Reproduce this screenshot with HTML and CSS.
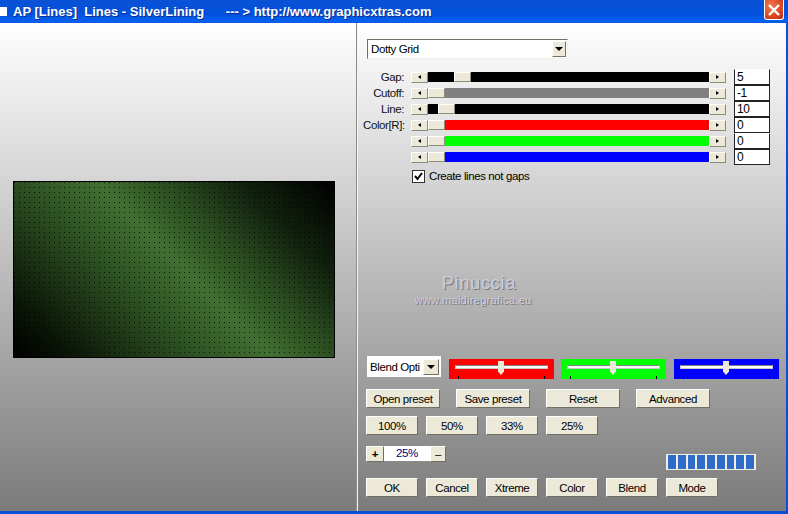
FILE: index.html
```html
<!DOCTYPE html>
<html lang="en">
  <head>
    <meta charset="utf-8">
    <title>AP [Lines] Lines - SilverLining</title>
    <link rel="stylesheet" href="styles.css">
  </head>

  <body>
    <div class="window">

      <div class="titleBar">
        <span class="appIcon"></span>
        <span class="titleText">AP [Lines]&nbsp; Lines - SilverLining &nbsp; &nbsp; &nbsp;--- &gt; http://www.graphicxtras.com</span>
        <span class="closeBtn">
          <svg width="14" height="14" viewBox="0 0 14 14"><path d="M2 2 L12 12 M12 2 L2 12" stroke="#fff" stroke-width="2.4"/></svg>
        </span>
      </div>

      <div class="client">
        <div class="previewPane">
          <div class="preview"></div>
        </div>

        <div class="controls">
          <div class="combo wide">
            <span class="comboText">Dotty Grid</span>
            <span class="comboArrow"></span>
          </div>

          <div class="sliders">
            <div class="sliderRow">
              <label>Gap:</label>
              <div class="scrollbar">
                <span class="arrow left"></span>
                <div class="track black"><span class="pad gapPad"></span><span class="thumb"></span></div>
                <span class="arrow right"></span>
              </div>
              <span class="value open">5</span>
            </div>
            <div class="sliderRow">
              <label>Cutoff:</label>
              <div class="scrollbar">
                <span class="arrow left"></span>
                <div class="track gray"><span class="thumb"></span></div>
                <span class="arrow right"></span>
              </div>
              <span class="value">-1</span>
            </div>
            <div class="sliderRow">
              <label>Line:</label>
              <div class="scrollbar">
                <span class="arrow left"></span>
                <div class="track black"><span class="pad linePad"></span><span class="thumb"></span></div>
                <span class="arrow right"></span>
              </div>
              <span class="value">10</span>
            </div>
            <div class="sliderRow">
              <label>Color[R]:</label>
              <div class="scrollbar">
                <span class="arrow left"></span>
                <div class="track red"><span class="thumb"></span></div>
                <span class="arrow right"></span>
              </div>
              <span class="value">0</span>
            </div>
            <div class="sliderRow">
              <label></label>
              <div class="scrollbar">
                <span class="arrow left"></span>
                <div class="track green"><span class="thumb"></span></div>
                <span class="arrow right"></span>
              </div>
              <span class="value open">0</span>
            </div>
            <div class="sliderRow">
              <label></label>
              <div class="scrollbar">
                <span class="arrow left"></span>
                <div class="track blue"><span class="thumb"></span></div>
                <span class="arrow right"></span>
              </div>
              <span class="value">0</span>
            </div>
          </div>

          <div class="checkRow">
            <span class="checkbox">
              <svg width="11" height="11" viewBox="0 0 11 11"><path d="M2 5 L4.5 8 L9 2" fill="none" stroke="#000" stroke-width="2"/></svg>
            </span>
            <span>Create lines not gaps</span>
          </div>

          <div class="watermark">
            <div class="wmName">Pinuccia</div>
            <div class="wmUrl">www.maidiregrafica.eu</div>
          </div>

          <div class="blendRow">
            <div class="combo small">
              <span class="comboText">Blend Opti</span>
              <span class="comboArrow"></span>
            </div>
            <div class="tint red"><div class="tintLine"></div><span class="tintThumb"></span><i class="tick t1"></i><i class="tick t2"></i></div>
            <div class="tint green"><div class="tintLine"></div><span class="tintThumb"></span><i class="tick t1"></i><i class="tick t2"></i></div>
            <div class="tint blue"><div class="tintLine"></div><span class="tintThumb"></span><i class="tick t1"></i><i class="tick t2"></i></div>
          </div>

          <div class="btnRow presets">
            <button class="btn wideBtn">Open preset</button>
            <button class="btn wideBtn">Save preset</button>
            <button class="btn wideBtn">Reset</button>
            <button class="btn wideBtn">Advanced</button>
          </div>

          <div class="btnRow scales">
            <button class="btn">100%</button>
            <button class="btn">50%</button>
            <button class="btn">33%</button>
            <button class="btn">25%</button>
          </div>

          <div class="zoomRow">
            <button class="btn zoomBtn plus"><b>+</b></button>
            <span class="zoomValue">25%</span>
            <button class="btn zoomBtn">–</button>
            <div class="progress">
              <i></i><i></i><i></i><i></i><i></i><i></i><i></i><i></i><i></i>
            </div>
          </div>

          <div class="btnRow actions">
            <button class="btn">OK</button>
            <button class="btn">Cancel</button>
            <button class="btn">Xtreme</button>
            <button class="btn">Color</button>
            <button class="btn">Blend</button>
            <button class="btn">Mode</button>
          </div>
        </div>
      </div>

    </div>
  </body>
</html>
```

FILE: styles.css
```css
body{
  margin: 0;
  background: #0a4ed8;
  font-family: 'Liberation Sans', Arial, sans-serif;
  font-size: 11.5px;
  letter-spacing: -0.4px;
  color: #000;
}

.window{
  width: 788px;
  height: 514px;
  display: flex;
  flex-direction: column;
  overflow: hidden;
}

/* title bar */
.titleBar{
  height: 23px;
  flex: none;
  display: flex;
  align-items: center;
  background: linear-gradient(#0a52d6 0%, #0250dc 60%, #0560f0 90%, #0a58e0 100%);
  color: #fff;
  font-weight: bold;
  font-size: 13px;
  letter-spacing: 0;
  white-space: pre;
}

.appIcon{
  width: 7px;
  height: 9px;
  margin-right: 6px;
  background: #fff;
  flex: none;
}

.titleText{
  flex: 1;
  text-shadow: 1px 1px 0 #0a2f90;
}

.closeBtn{
  width: 20px;
  height: 20px;
  margin-right: 4px;
  align-self: flex-start;
  border: 1px solid #fff;
  border-top: 0;
  border-radius: 0 0 3px 3px;
  box-sizing: border-box;
  background: radial-gradient(circle at 30% 30%, #ee7a50, #d4401c 70%, #b8300e);
  display: flex;
  align-items: center;
  justify-content: center;
}

/* client area */
.client{
  flex: 1;
  display: flex;
  margin: 0 2px 3px 0;
  background: linear-gradient(#ffffff 0%, #7b7b7b 100%);
  min-height: 0;
}

.previewPane{
  width: 357px;
  flex: none;
  box-sizing: border-box;
  padding-left: 13px;
  padding-top: 158px;
  border-right: 1px solid #8c8c8c;
  box-shadow: 1px 0 0 #f4f4f4;
}

.preview{
  width: 320px;
  height: 175px;
  border: 1px solid #000;
  background-image:
    radial-gradient(circle at 0.5px 0.5px, rgba(0,0,0,0.8) 0.5px, transparent 0.9px),
    linear-gradient(45deg, #000 0%, #0a1507 12%, #16290f 20%, #2c5022 36%, #416f31 52%, #2a4c20 66%, #12230e 80%, #000 100%);
  background-size: 5px 5px, 100% 100%;
}

.controls{
  position: relative;
  flex: 1;
  padding: 16px 0 0 9px;
  min-width: 0;
}

/* comboboxes */
.combo{
  box-sizing: border-box;
  display: flex;
  align-items: center;
  justify-content: space-between;
  height: 20px;
  background: #fff;
  border: 1px solid;
  border-color: #716f64 #f1efe2 #f1efe2 #716f64;
  padding: 0 1px 0 3px;
}

.wide{
  width: 201px;
  margin: 0 0 10px 1px;
}

.comboText{
  white-space: nowrap;
  overflow: hidden;
}

.comboArrow{
  width: 14px;
  height: 16px;
  flex: none;
  box-sizing: border-box;
  background: #ece9d8;
  border: 1px solid;
  border-color: #fff #716f64 #716f64 #fff;
  position: relative;
}

.comboArrow::after{
  content: '';
  position: absolute;
  left: 2px;
  top: 5px;
  border: 4px solid transparent;
  border-top: 4px solid #000;
  border-bottom: 0;
}

/* sliders */
.sliders{
  margin-left: -3px;
}

.sliderRow{
  display: flex;
  align-items: center;
  height: 16px;
}

.sliderRow label{
  width: 41px;
  text-align: right;
  margin-right: 7px;
  color: #111;
  flex: none;
}

.scrollbar{
  width: 315px;
  height: 10px;
  display: flex;
  flex: none;
}

.arrow{
  width: 17px;
  height: 11px;
  flex: none;
  box-sizing: border-box;
  background: #ece9d8;
  border: 1px solid;
  border-color: #fff #8c8a7c #8c8a7c #fff;
  position: relative;
}

.arrow::after{
  content: '';
  position: absolute;
  top: 2px;
  left: 6px;
  border: 2.5px solid transparent;
}

.arrow.left::after{
  border-right: 3px solid #000;
  border-left: 0;
}

.arrow.right::after{
  border-left: 3px solid #000;
  border-right: 0;
}

.track{
  flex: 1;
  display: flex;
}

.pad{
  flex: none;
}

.gapPad{
  width: 26px;
}

.linePad{
  width: 10px;
}

.thumb{
  width: 17px;
  height: 10px;
  flex: none;
  box-sizing: border-box;
  background: #ece9d8;
  border: 1px solid;
  border-color: #fff #8c8a7c #8c8a7c #fff;
}

.black{
  background: #000;
}

.gray{
  background: #808080;
}

.red{
  background: #ff0000;
}

.green{
  background: #00ff00;
}

.blue{
  background: #0000ff;
}

.value{
  box-sizing: border-box;
  width: 36px;
  height: 16px;
  margin-left: 8px;
  background: #fff;
  border: 1px solid #222;
  padding-left: 2px;
  font-size: 12px;
  line-height: 14px;
  flex: none;
}

.open{
  border-top-color: #fff;
}

.checkRow{
  display: flex;
  align-items: center;
  gap: 4px;
  margin: 4px 0 0 46px;
  height: 14px;
}

.checkbox{
  width: 13px;
  height: 13px;
  box-sizing: border-box;
  background: #fff;
  border: 1px solid #333;
  display: flex;
  align-items: center;
  justify-content: center;
}

/* watermark over the panel */
.watermark{
  position: absolute;
  left: 55px;
  top: 250px;
  width: 122px;
  text-align: center;
  letter-spacing: 0;
  color: #ccccdc;
  text-shadow: 1px 1px 0 #77777f;
}

.wmName{
  font-size: 18px;
  line-height: 21px;
  letter-spacing: 0.8px;
  padding-left: 12px;
}

.wmUrl{
  font-size: 11px;
  line-height: 13px;
  letter-spacing: 0.3px;
  white-space: nowrap;
}

/* colour blocks */
.blendRow{
  display: flex;
  align-items: flex-start;
  margin: 173px 0 0 1px;
}

.small{
  width: 74px;
  height: 21px;
  margin-right: 8px;
  padding-left: 2px;
  border-color: #fff;
}

.small .comboArrow{
  width: 16px;
  flex: none;
}

.small .comboArrow::after{
  left: 3px;
}

.tint{
  position: relative;
  width: 105px;
  height: 20px;
  margin: 3px 7px 0 0;
}

.tint.blue{
  margin-left: 1px;
}

.tintLine{
  position: absolute;
  left: 6px;
  right: 6px;
  top: 6px;
  height: 4px;
  box-sizing: border-box;
  background: #fff;
  border: 1px solid #c8c8c8;
  border-top-color: #808080;
}

.tintThumb{
  position: absolute;
  left: 49px;
  top: 2px;
  width: 6px;
  height: 14px;
  background: #ece9d8;
  clip-path: polygon(0 0, 100% 0, 100% 75%, 50% 100%, 0 75%);
}

.tick{
  position: absolute;
  top: 17px;
  width: 1px;
  height: 3px;
  background: #000;
}

.t1{
  left: 9px;
}

.t2{
  left: 95px;
}

/* buttons */
.btn{
  box-sizing: border-box;
  width: 52px;
  height: 19px;
  padding: 0;
  background: #ece9d8;
  border: 1px solid;
  border-color: #fff #716f64 #716f64 #fff;
  font-family: 'Liberation Sans', Arial, sans-serif;
  font-size: 11.5px;
  letter-spacing: -0.4px;
  color: #000;
  flex: none;
}

.btnRow{
  display: flex;
  gap: 8px;
}

.presets{
  margin-top: 10px;
  gap: 16px;
}

.wideBtn{
  width: 74px;
}

.scales{
  margin-top: 8px;
}

.zoomRow{
  display: flex;
  height: 24px;
  margin-top: 11px;
}

.zoomBtn{
  width: 16px;
  height: 16px;
}

.plus{
  width: 18px;
}

.zoomValue{
  width: 46px;
  height: 15px;
  background: #fff;
  color: #000080;
  text-align: center;
  line-height: 15px;
}

.progress{
  align-self: flex-end;
  margin-left: 220px;
  box-sizing: border-box;
  width: 90px;
  height: 16px;
  display: flex;
  gap: 2px;
  padding: 1px 2px;
  background: #f1efe2;
}

.progress i{
  width: 8px;
  background: #2f6bc8;
}

.actions{
  margin-top: 8px;
}
```
